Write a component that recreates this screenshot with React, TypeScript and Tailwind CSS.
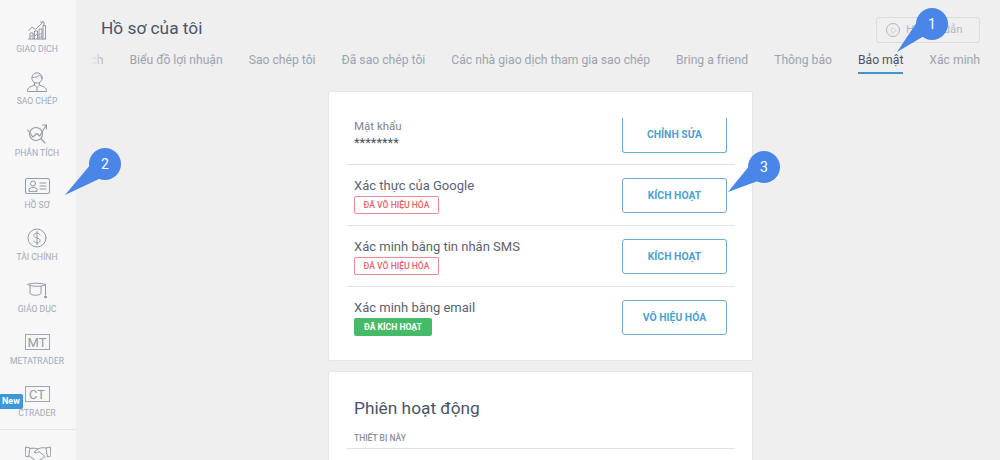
import { Play } from "lucide-react";
import type { ReactNode } from "react";

const iconProps = {
  fill: "none",
  stroke: "#939aa6",
  strokeWidth: 1,
  strokeLinecap: "round" as const,
  strokeLinejoin: "round" as const,
};

const ChartIcon = () => (
  <svg width="18" height="19" viewBox="0 0 18 19" {...iconProps}>
    <path d="M2 18v-6h3v6M6.500 18V10h3v8M11 18V8h3v10M15 18V4.500h2.500V18M0.500 18h17" />
    <path d="M1 9.500l3-3.500 3.500 2.500L15 1" />
    <path d="M12.500 1H16v3.500" />
    <path d="M2.500 16l2-2M7 15l2-2M11.500 14l2-2M11.500 17l2-2" />
  </svg>
);

const PersonIcon = () => (
  <svg width="20" height="20" viewBox="0 0 20 20" {...iconProps}>
    <circle cx="10" cy="6" r="5.200" />
    <path d="M5.500 5.500C8 5.500 11.500 5 12.500 3c1 .7 2 1.700 2 3" />
    <path d="M7.500 11v2l-5 2.200C1 16 .5 17.500 .5 19.500h19c0-2-.5-3.500-2-4.300l-5-2.200v-2" />
    <path d="M7.500 13l2.500 2.500 2.500-2.500M10 15.500v4" />
  </svg>
);

const AnalysisIcon = () => (
  <svg width="20" height="20" viewBox="0 0 20 20" {...iconProps} strokeWidth={1.100}>
    <circle cx="9" cy="10" r="6.500" />
    <path d="M13.800 14.500L18 19" />
    <path d="M.8 6l5 7 4-3.500 3 2.500L19 1.500" />
    <path d="M15.500 1H19.500v4" />
  </svg>
);

const CardIcon = () => (
  <svg width="25" height="16" viewBox="0 0 25 16" {...iconProps}>
    <rect x="0.500" y="0.500" width="24" height="15" rx="1.500" />
    <circle cx="8" cy="5.500" r="2.500" />
    <path d="M4 13v-2l2.500-1.500h3L12 11v2z" />
    <path d="M15 5h6M15 8h6M15 11h6" />
  </svg>
);

const DollarIcon = () => (
  <svg width="20" height="20" viewBox="0 0 20 20" {...iconProps}>
    <circle cx="10" cy="10" r="9" />
    <path d="M13 7c-.500-1.300-1.700-2-3-2-1.800 0-3 1-3 2.500 0 3.300 6 1.700 6 5 0 1.500-1.200 2.500-3 2.500-1.300 0-2.500-.7-3-2M10 3.500v13" />
  </svg>
);

const CapIcon = () => (
  <svg width="20" height="17" viewBox="0 0 20 17" {...iconProps}>
    <path d="M1 2.500C4 .8 13 .8 19 2.500 14 5 6 5 1 2.500z" />
    <path d="M3 4v7c0 3 11 3 11 0V4.500" />
    <path d="M18.500 3v10" />
    <circle cx="18.500" cy="15" r="1" fill="#939aa6" />
  </svg>
);

const HandshakeIcon = () => (
  <svg width="26" height="18" viewBox="0 0 26 18" {...iconProps}>
    <path d="M1 2l4 1-1.500 9L0.500 11zM25 2l-4 1 1.500 9 3 -1z" />
    <path d="M5 3.500c3-.5 5-.5 8 .5 3-1.500 5-1.500 8-1" />
    <path d="M13 4l-4 3c1 1.500 3 1 5-.5l6.500 5.500" />
    <path d="M4.500 11l7 5.500c1 .5 2-.5 1.500-1 1 .5 2 0 2-1 1 .5 2 0 2-1 1 0 2-.5 1.500-1.500" />
  </svg>
);

const BoxLabel = ({ children }: { children: ReactNode }) => (
  <span className="flex h-[16px] w-[25px] items-center justify-center border border-[#a0a6b1] text-[13px] leading-none text-[#939aa6]">
    {children}
  </span>
);

const NAV_ITEMS = [
  { label: "GIAO DỊCH", icon: <ChartIcon /> },
  { label: "SAO CHÉP", icon: <PersonIcon /> },
  { label: "PHÂN TÍCH", icon: <AnalysisIcon /> },
  { label: "HỒ SƠ", icon: <CardIcon /> },
  { label: "TÀI CHÍNH", icon: <DollarIcon /> },
  { label: "GIÁO DỤC", icon: <CapIcon /> },
  { label: "METATRADER", icon: <BoxLabel>MT</BoxLabel> },
  { label: "CTRADER", icon: <BoxLabel>CT</BoxLabel>, isNew: true },
];

const TABS = [
  "Lịch sử giao dịch",
  "Biểu đồ lợi nhuận",
  "Sao chép tôi",
  "Đã sao chép tôi",
  "Các nhà giao dịch tham gia sao chép",
  "Bring a friend",
  "Thông báo",
  "Bảo mật",
  "Xác minh",
];

const ROWS = [
  { title: "Xác thực của Google", status: "off", action: "KÍCH HOẠT" },
  { title: "Xác minh bằng tin nhắn SMS", status: "off", action: "KÍCH HOẠT" },
  { title: "Xác minh bằng email", status: "on", action: "VÔ HIỆU HÓA" },
];

const ActionButton = ({ label, className }: { label: string; className: string }) => (
  <button className={`flex w-[105px] items-center justify-center rounded-[3px] border border-[#6dabd4] text-[10.400px] font-bold text-[#4f9fd3] ${className}`}>
    {label}
  </button>
);

const Callout = ({ num, className, tail }: { num: number; className: string; tail: string }) => (
  <div className={`absolute h-[60px] w-[70px] ${className}`}>
    <svg width="70" height="60" viewBox="0 0 70 60" className="absolute left-0 top-0">
      <path d={tail} fill="#4a86e8" />
      <circle cx="52" cy="16" r="16" fill="#4a86e8" />
    </svg>
    <span className="absolute left-[36px] top-0 flex h-[32px] w-[32px] items-center justify-center text-[14px] text-white">
      {num}
    </span>
  </div>
);

const App = () => {
  return (
    <div className="relative flex h-[460px] w-[1000px] overflow-hidden bg-[#efefef] font-['Roboto',sans-serif]">
      {/* Sidebar */}
      <aside className="flex w-[76px] shrink-0 flex-col items-center bg-[#f7f7f8] pt-[13px]">
        {NAV_ITEMS.map(({ label, icon, isNew }) => (
          <div key={label} className="relative flex h-[52px] w-full shrink-0 flex-col items-center pr-[2px] pt-[5px]">
            <div className="flex h-[24px] items-center justify-center">{icon}</div>
            <span className="mt-px text-[8.600px] leading-[12px] text-[#a3a9b5]">{label}</span>
            {isNew && (
              <span className="absolute left-0 top-[17px] rounded-r-[2px] bg-[#3a9ad9] pl-[2px] pr-[3px] text-[9px] font-bold leading-[15px] text-white">
                New
              </span>
            )}
          </div>
        ))}
        <div className="w-full border-t border-[#e3e3e3] pr-[1px] pt-[15px]">
          <div className="flex justify-center">
            <HandshakeIcon />
          </div>
        </div>
      </aside>

      {/* Main */}
      <main className="flex min-w-0 flex-1 flex-col overflow-hidden">
        <div className="flex h-[48px] shrink-0 items-start justify-between pl-[25px] pr-[20px] pt-[17px]">
          <h1 className="text-[17.300px] leading-[22px] text-[#4a5468]">Hồ sơ của tôi</h1>
          <button className="flex h-[26px] w-[104px] items-center rounded-[3px] border border-[#dcdcdc] pl-[9px] text-[11.500px] text-[#b3b8c1]">
            <span className="mr-[6px] flex h-[14px] w-[14px] items-center justify-center rounded-full border border-[#b3b8c1]">
              <Play size={7} strokeWidth={1.500} />
            </span>
            Hướng dẫn
          </button>
        </div>

        {/* Tabs */}
        <div className="relative flex h-[43px] shrink-0 justify-end gap-[26px] overflow-hidden pr-[20px] text-[12.160px] leading-[24px] text-[#9da3af]">
          {TABS.map((tab) => (
            <div key={tab} className="shrink-0">
              <span className={tab === "Bảo mật" ? "inline-block h-[26px] border-b-2 border-[#3d95cc] text-[#4a5468]" : "inline-block"}>
                {tab}
              </span>
            </div>
          ))}
          <div className="absolute left-0 top-0 h-full w-[30px] bg-gradient-to-r from-[#efefef] from-50% to-transparent" />
        </div>

        <div className="flex shrink-0 flex-col items-start pl-[252px]">
          {/* Security card */}
          <section className="h-[270px] w-[425px] rounded-[2px] border border-[#e6e6e6] bg-white px-[17px]">
            <div className="flex h-[73px] items-start justify-between border-b border-[#e3e3e3] px-[8px]">
              <div className="pt-[27px]">
                <p className="text-[11.500px] leading-[14px] text-[#7d8594]">Mật khẩu</p>
                <p className="mt-[2px] text-[13px] leading-[16px] text-[#4a5468]">********</p>
              </div>
              <ActionButton label="CHỈNH SỬA" className="mt-[26px] h-[35px] rounded-t-none border-t-0" />
            </div>
            {ROWS.map(({ title, status, action }, i) => (
              <div
                key={title}
                className={`flex h-[61px] items-start justify-between px-[8px] ${i < 2 ? "border-b border-[#e3e3e3]" : ""}`}
              >
                <div className="pt-[12px]">
                  <p className="text-[13px] leading-[18px] text-[#5a6375]">{title}</p>
                  {status === "off" ? (
                    <span className="mt-px flex h-[18px] w-[85px] items-center justify-center rounded-[2px] border border-[#ee8a90] text-[8.600px] font-medium text-[#e8636b]">
                      ĐÃ VÔ HIỆU HÓA
                    </span>
                  ) : (
                    <span className="mt-px flex h-[18px] w-[78px] items-center justify-center rounded-[2px] bg-[#45bb6a] text-[8.600px] font-bold text-white">
                      ĐÃ KÍCH HOẠT
                    </span>
                  )}
                </div>
                <ActionButton label={action} className="mt-[13px] h-[35px]" />
              </div>
            ))}
          </section>

          {/* Sessions card */}
          <section className="mt-[10px] h-[100px] w-[425px] rounded-[2px] border border-[#e6e6e6] bg-white px-[17px]">
            <h2 className="pl-[8px] pt-[24px] text-[17.300px] leading-[24px] text-[#4a5468]">Phiên hoạt động</h2>
            <p className="mt-[12px] border-b border-[#e3e3e3] pb-[4px] pl-[8px] text-[8.500px] font-medium leading-[12px] text-[#8a909c]">
              THIẾT BỊ NÀY
            </p>
          </section>
        </div>
      </main>

      {/* Callouts */}
      <Callout num={1} className="left-[880px] top-[8px]" tail="M44 28L17 44 37 14z" />
      <Callout num={2} className="left-[53px] top-[148px]" tail="M48 30L12 47 38 16z" />
      <Callout num={3} className="left-[712px] top-[151px]" tail="M46 30L16 41 38 14z" />
    </div>
  );
};

export default App;
